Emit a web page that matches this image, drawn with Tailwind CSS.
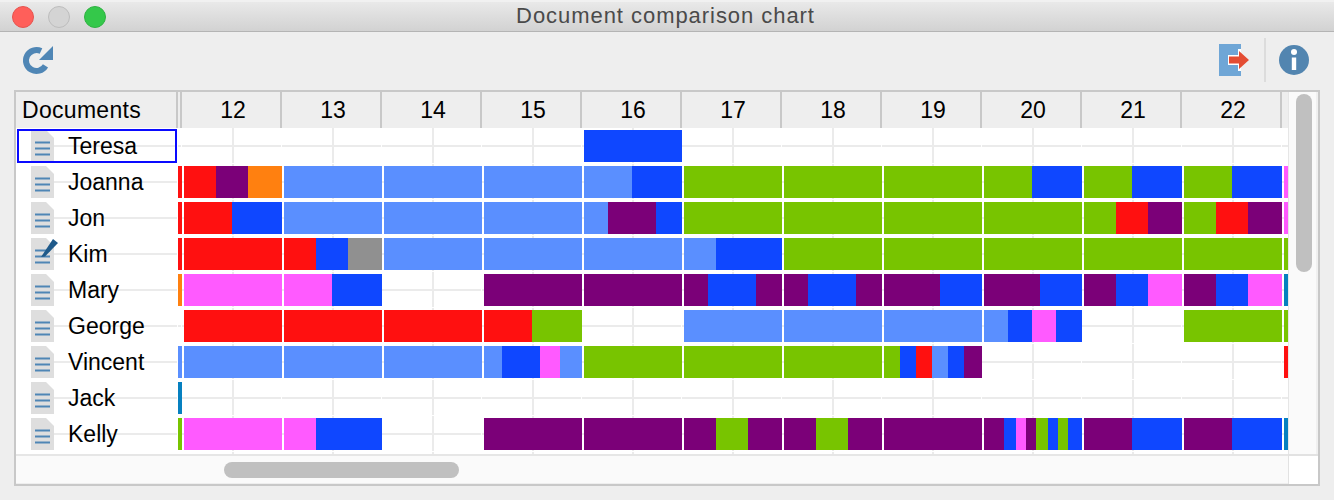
<!DOCTYPE html>
<html lang="en">
<head>
    <meta charset="UTF-8">
    <title>Document comparison chart</title>
    <script src="https://cdn.jsdelivr.net/npm/@tailwindcss/browser@4"></script>
</head>
<body class="bg-[#eeeeee] h-[500px] overflow-hidden font-['Liberation_Sans',sans-serif] text-black">
    <!-- title bar -->
    <header class="flex items-center h-[32px] pl-[12px] border-t-2 border-b border-t-[#f1f1f1] border-b-[#b4b4b4] bg-gradient-to-b from-[#e9e9e9] to-[#d2d2d2]">
        <div class="flex gap-[14px]">
            <div class="w-[22px] h-[22px] rounded-full bg-[#ff5f5a] border border-[#e5544f]"></div>
            <div class="w-[22px] h-[22px] rounded-full bg-[#d4d4d4] border border-[#bdbdbd]"></div>
            <div class="w-[22px] h-[22px] rounded-full bg-[#34c84a] border border-[#2fb242]"></div>
        </div>
        <h1 class="flex-1 pr-[109px] pb-[2px] text-center text-[22px] tracking-[0.95px] text-[#4a4a4a]">Document comparison chart</h1>
    </header>

    <!-- toolbar -->
    <div class="flex items-center justify-between h-[58px] pb-[2px] pl-[20px] pr-[24px]">
        <svg width="36" height="36" viewBox="0 0 36 36">
            <path d="M21 9A10.5 10.5 0 1 0 25.5 23.9" fill="none" stroke="#4f86b5" stroke-width="6"/>
            <polygon points="33,4 33,18 19,18" fill="#4f86b5"/>
        </svg>
        <div class="flex items-center">
            <svg width="32" height="32" viewBox="0 0 32 32">
                <rect width="22" height="32" fill="#6fa6d6"/>
                <polygon points="9,11 22,11 22,21 9,21" fill="#fff"/>
                <polygon points="19,5 22,5 22,27 19,27" fill="#fff"/>
                <polygon points="10,12.5 20,12.5 20,7 30,16 20,25 20,19.5 10,19.5" fill="#e44d33"/>
            </svg>
            <div class="w-[2px] h-[44px] bg-[#dcdcdc] ml-[13px] mr-[12px]"></div>
            <svg width="32" height="32" viewBox="0 0 32 32">
                <circle cx="16" cy="16" r="15" fill="#5285b0"/>
                <circle cx="16" cy="8" r="3" fill="#fff"/>
                <rect x="13.8" y="13.5" width="4.4" height="12.5" fill="#fff"/>
            </svg>
        </div>
    </div>

    <!-- chart table -->
    <div class="flex ml-[14px] w-[1306px] h-[396px] border-2 border-[#c8c8c8]">
        <div class="w-[1272px]">
            <div class="flex h-[36px] text-[23px] leading-[36px] text-center">
                <div class="w-[162px] pl-[6px] text-left border-r-2 border-[#c8c8c8] tracking-[0.3px]">Documents</div>
                <div class="w-[4px] border-r-2 border-[#c8c8c8]"></div>
                <div class="w-[100px] pl-[4px] border-r-2 border-[#c8c8c8]">12</div>
                <div class="w-[100px] pl-[4px] border-r-2 border-[#c8c8c8]">13</div>
                <div class="w-[100px] pl-[4px] border-r-2 border-[#c8c8c8]">14</div>
                <div class="w-[100px] pl-[4px] border-r-2 border-[#c8c8c8]">15</div>
                <div class="w-[100px] pl-[4px] border-r-2 border-[#c8c8c8]">16</div>
                <div class="w-[100px] pl-[4px] border-r-2 border-[#c8c8c8]">17</div>
                <div class="w-[100px] pl-[4px] border-r-2 border-[#c8c8c8]">18</div>
                <div class="w-[100px] pl-[4px] border-r-2 border-[#c8c8c8]">19</div>
                <div class="w-[100px] pl-[4px] border-r-2 border-[#c8c8c8]">20</div>
                <div class="w-[100px] pl-[4px] border-r-2 border-[#c8c8c8]">21</div>
                <div class="w-[100px] pl-[4px] border-r-2 border-[#c8c8c8]">22</div>
            </div>

            <div class="flex h-[326px] bg-white">
                <!-- document names -->
                <div class="relative w-[162px] text-[23px] leading-[36px] bg-[image:linear-gradient(to_bottom,transparent_17px,#ebebeb_17px,#ebebeb_19px,transparent_19px)] bg-[size:146px_36px] bg-[position:15px_0] bg-repeat-y">
                    <div class="absolute top-[1px] left-[1px] w-[160px] h-[34px] border-2 border-[#0a0aff]"></div>
                    <div class="flex items-center h-[36px] pl-[15px]">
                        <svg width="23" height="32" viewBox="0 0 23 32"><polygon points="0,0 15,0 23,8 23,32 0,32" fill="#dedede"/><path d="M4 12.5h15M4 18.5h15M4 24.5h15" stroke="#4f86b5" stroke-width="2"/></svg>
                        <span class="ml-[14px]">Teresa</span>
                    </div>
                    <div class="flex items-center h-[36px] pl-[15px]">
                        <svg width="23" height="32" viewBox="0 0 23 32"><polygon points="0,0 15,0 23,8 23,32 0,32" fill="#dedede"/><path d="M4 12.5h15M4 18.5h15M4 24.5h15" stroke="#4f86b5" stroke-width="2"/></svg>
                        <span class="ml-[14px]">Joanna</span>
                    </div>
                    <div class="flex items-center h-[36px] pl-[15px]">
                        <svg width="23" height="32" viewBox="0 0 23 32"><polygon points="0,0 15,0 23,8 23,32 0,32" fill="#dedede"/><path d="M4 12.5h15M4 18.5h15M4 24.5h15" stroke="#4f86b5" stroke-width="2"/></svg>
                        <span class="ml-[14px]">Jon</span>
                    </div>
                    <div class="flex items-center h-[36px] pl-[15px]">
                        <svg width="28" height="32" viewBox="0 0 28 32" class="mr-[-5px] overflow-visible"><polygon points="0,0 15,0 23,8 23,32 0,32" fill="#dedede"/><path d="M4 12.5h15M4 18.5h15M4 24.5h15" stroke="#4f86b5" stroke-width="2"/><polygon points="10,19 22,1 27,5 14,18.5" fill="#1f5a8a"/></svg>
                        <span class="ml-[14px]">Kim</span>
                    </div>
                    <div class="flex items-center h-[36px] pl-[15px]">
                        <svg width="23" height="32" viewBox="0 0 23 32"><polygon points="0,0 15,0 23,8 23,32 0,32" fill="#dedede"/><path d="M4 12.5h15M4 18.5h15M4 24.5h15" stroke="#4f86b5" stroke-width="2"/></svg>
                        <span class="ml-[14px]">Mary</span>
                    </div>
                    <div class="flex items-center h-[36px] pl-[15px]">
                        <svg width="23" height="32" viewBox="0 0 23 32"><polygon points="0,0 15,0 23,8 23,32 0,32" fill="#dedede"/><path d="M4 12.5h15M4 18.5h15M4 24.5h15" stroke="#4f86b5" stroke-width="2"/></svg>
                        <span class="ml-[14px]">George</span>
                    </div>
                    <div class="flex items-center h-[36px] pl-[15px]">
                        <svg width="23" height="32" viewBox="0 0 23 32"><polygon points="0,0 15,0 23,8 23,32 0,32" fill="#dedede"/><path d="M4 12.5h15M4 18.5h15M4 24.5h15" stroke="#4f86b5" stroke-width="2"/></svg>
                        <span class="ml-[14px]">Vincent</span>
                    </div>
                    <div class="flex items-center h-[36px] pl-[15px]">
                        <svg width="23" height="32" viewBox="0 0 23 32"><polygon points="0,0 15,0 23,8 23,32 0,32" fill="#dedede"/><path d="M4 12.5h15M4 18.5h15M4 24.5h15" stroke="#4f86b5" stroke-width="2"/></svg>
                        <span class="ml-[14px]">Jack</span>
                    </div>
                    <div class="flex items-center h-[36px] pl-[15px]">
                        <svg width="23" height="32" viewBox="0 0 23 32"><polygon points="0,0 15,0 23,8 23,32 0,32" fill="#dedede"/><path d="M4 12.5h15M4 18.5h15M4 24.5h15" stroke="#4f86b5" stroke-width="2"/></svg>
                        <span class="ml-[14px]">Kelly</span>
                    </div>
                </div>

                <!-- bars -->
                <div class="flex flex-col gap-[4px] pt-[2px] w-[1110px] overflow-hidden bg-[image:linear-gradient(to_right,transparent_3px,#fff_3px,#fff_4px,transparent_4px),linear-gradient(to_bottom,transparent_35px,#fff_35px),linear-gradient(to_right,transparent_54px,#ebebeb_54px,#ebebeb_56px,transparent_56px),linear-gradient(to_bottom,transparent_17px,#ebebeb_17px,#ebebeb_19px,transparent_19px)] bg-[size:100px_36px]">
                    <!-- Teresa -->
                    <div class="flex gap-[2px] h-[32px]">
                        <div class="w-[4px]"></div>
                        <div class="w-[98px]"></div><div class="w-[98px]"></div><div class="w-[98px]"></div><div class="w-[98px]"></div>
                        <div class="w-[98px] bg-[#0f47ff]"></div>
                    </div>
                    <!-- Joanna -->
                    <div class="flex gap-[2px] h-[32px]">
                        <div class="w-[4px] bg-[#ff1010]"></div>
                        <div class="flex w-[98px]"><div class="w-[32px] bg-[#ff1010]"></div><div class="w-[32px] bg-[#7b0078]"></div><div class="w-[34px] bg-[#ff8010]"></div></div>
                        <div class="w-[98px] bg-[#5a8fff]"></div>
                        <div class="w-[98px] bg-[#5a8fff]"></div>
                        <div class="w-[98px] bg-[#5a8fff]"></div>
                        <div class="flex w-[98px]"><div class="w-[48px] bg-[#5a8fff]"></div><div class="w-[50px] bg-[#0f47ff]"></div></div>
                        <div class="w-[98px] bg-[#78c400]"></div>
                        <div class="w-[98px] bg-[#78c400]"></div>
                        <div class="w-[98px] bg-[#78c400]"></div>
                        <div class="flex w-[98px]"><div class="w-[48px] bg-[#78c400]"></div><div class="w-[50px] bg-[#0f47ff]"></div></div>
                        <div class="flex w-[98px]"><div class="w-[48px] bg-[#78c400]"></div><div class="w-[50px] bg-[#0f47ff]"></div></div>
                        <div class="flex w-[98px]"><div class="w-[48px] bg-[#78c400]"></div><div class="w-[50px] bg-[#0f47ff]"></div></div>
                        <div class="w-[4px] bg-[#ff5aff]"></div>
                    </div>
                    <!-- Jon -->
                    <div class="flex gap-[2px] h-[32px]">
                        <div class="w-[4px] bg-[#ff1010]"></div>
                        <div class="flex w-[98px]"><div class="w-[48px] bg-[#ff1010]"></div><div class="w-[50px] bg-[#0f47ff]"></div></div>
                        <div class="w-[98px] bg-[#5a8fff]"></div>
                        <div class="w-[98px] bg-[#5a8fff]"></div>
                        <div class="w-[98px] bg-[#5a8fff]"></div>
                        <div class="flex w-[98px]"><div class="w-[24px] bg-[#5a8fff]"></div><div class="w-[48px] bg-[#7b0078]"></div><div class="w-[26px] bg-[#0f47ff]"></div></div>
                        <div class="w-[98px] bg-[#78c400]"></div>
                        <div class="w-[98px] bg-[#78c400]"></div>
                        <div class="w-[98px] bg-[#78c400]"></div>
                        <div class="w-[98px] bg-[#78c400]"></div>
                        <div class="flex w-[98px]"><div class="w-[32px] bg-[#78c400]"></div><div class="w-[32px] bg-[#ff1010]"></div><div class="w-[34px] bg-[#7b0078]"></div></div>
                        <div class="flex w-[98px]"><div class="w-[32px] bg-[#78c400]"></div><div class="w-[32px] bg-[#ff1010]"></div><div class="w-[34px] bg-[#7b0078]"></div></div>
                        <div class="w-[4px] bg-[#ff5aff]"></div>
                    </div>
                    <!-- Kim -->
                    <div class="flex gap-[2px] h-[32px]">
                        <div class="w-[4px] bg-[#ff1010]"></div>
                        <div class="w-[98px] bg-[#ff1010]"></div>
                        <div class="flex w-[98px]"><div class="w-[32px] bg-[#ff1010]"></div><div class="w-[32px] bg-[#0f47ff]"></div><div class="w-[34px] bg-[#909090]"></div></div>
                        <div class="w-[98px] bg-[#5a8fff]"></div>
                        <div class="w-[98px] bg-[#5a8fff]"></div>
                        <div class="w-[98px] bg-[#5a8fff]"></div>
                        <div class="flex w-[98px]"><div class="w-[32px] bg-[#5a8fff]"></div><div class="w-[66px] bg-[#0f47ff]"></div></div>
                        <div class="w-[98px] bg-[#78c400]"></div>
                        <div class="w-[98px] bg-[#78c400]"></div>
                        <div class="w-[98px] bg-[#78c400]"></div>
                        <div class="w-[98px] bg-[#78c400]"></div>
                        <div class="w-[98px] bg-[#78c400]"></div>
                        <div class="w-[4px] bg-[#78c400]"></div>
                    </div>
                    <!-- Mary -->
                    <div class="flex gap-[2px] h-[32px]">
                        <div class="w-[4px] bg-[#ff8010]"></div>
                        <div class="w-[98px] bg-[#ff5aff]"></div>
                        <div class="flex w-[98px]"><div class="w-[48px] bg-[#ff5aff]"></div><div class="w-[50px] bg-[#0f47ff]"></div></div>
                        <div class="w-[98px]"></div>
                        <div class="w-[98px] bg-[#7b0078]"></div>
                        <div class="w-[98px] bg-[#7b0078]"></div>
                        <div class="flex w-[98px]"><div class="w-[24px] bg-[#7b0078]"></div><div class="w-[48px] bg-[#0f47ff]"></div><div class="w-[26px] bg-[#7b0078]"></div></div>
                        <div class="flex w-[98px]"><div class="w-[24px] bg-[#7b0078]"></div><div class="w-[48px] bg-[#0f47ff]"></div><div class="w-[26px] bg-[#7b0078]"></div></div>
                        <div class="flex w-[98px]"><div class="w-[56px] bg-[#7b0078]"></div><div class="w-[42px] bg-[#0f47ff]"></div></div>
                        <div class="flex w-[98px]"><div class="w-[56px] bg-[#7b0078]"></div><div class="w-[42px] bg-[#0f47ff]"></div></div>
                        <div class="flex w-[98px]"><div class="w-[32px] bg-[#7b0078]"></div><div class="w-[32px] bg-[#0f47ff]"></div><div class="w-[34px] bg-[#ff5aff]"></div></div>
                        <div class="flex w-[98px]"><div class="w-[32px] bg-[#7b0078]"></div><div class="w-[32px] bg-[#0f47ff]"></div><div class="w-[34px] bg-[#ff5aff]"></div></div>
                        <div class="w-[4px] bg-[#0680c0]"></div>
                    </div>
                    <!-- George -->
                    <div class="flex gap-[2px] h-[32px]">
                        <div class="w-[4px]"></div>
                        <div class="w-[98px] bg-[#ff1010]"></div>
                        <div class="w-[98px] bg-[#ff1010]"></div>
                        <div class="w-[98px] bg-[#ff1010]"></div>
                        <div class="flex w-[98px]"><div class="w-[48px] bg-[#ff1010]"></div><div class="w-[50px] bg-[#78c400]"></div></div>
                        <div class="w-[98px]"></div>
                        <div class="w-[98px] bg-[#5a8fff]"></div>
                        <div class="w-[98px] bg-[#5a8fff]"></div>
                        <div class="w-[98px] bg-[#5a8fff]"></div>
                        <div class="flex w-[98px]"><div class="w-[24px] bg-[#5a8fff]"></div><div class="w-[24px] bg-[#0f47ff]"></div><div class="w-[24px] bg-[#ff5aff]"></div><div class="w-[26px] bg-[#0f47ff]"></div></div>
                        <div class="w-[98px]"></div>
                        <div class="w-[98px] bg-[#78c400]"></div>
                        <div class="w-[4px] bg-[#78c400]"></div>
                    </div>
                    <!-- Vincent -->
                    <div class="flex gap-[2px] h-[32px]">
                        <div class="w-[4px] bg-[#5a8fff]"></div>
                        <div class="w-[98px] bg-[#5a8fff]"></div>
                        <div class="w-[98px] bg-[#5a8fff]"></div>
                        <div class="w-[98px] bg-[#5a8fff]"></div>
                        <div class="flex w-[98px]"><div class="w-[18px] bg-[#5a8fff]"></div><div class="w-[38px] bg-[#0f47ff]"></div><div class="w-[20px] bg-[#ff5aff]"></div><div class="w-[22px] bg-[#5a8fff]"></div></div>
                        <div class="w-[98px] bg-[#78c400]"></div>
                        <div class="w-[98px] bg-[#78c400]"></div>
                        <div class="w-[98px] bg-[#78c400]"></div>
                        <div class="flex w-[98px]"><div class="w-[16px] bg-[#78c400]"></div><div class="w-[16px] bg-[#0f47ff]"></div><div class="w-[16px] bg-[#ff1010]"></div><div class="w-[16px] bg-[#5a8fff]"></div><div class="w-[16px] bg-[#0f47ff]"></div><div class="w-[18px] bg-[#7b0078]"></div></div>
                        <div class="w-[98px]"></div>
                        <div class="w-[98px]"></div>
                        <div class="w-[98px]"></div>
                        <div class="w-[4px] bg-[#ff1010]"></div>
                    </div>
                    <!-- Jack -->
                    <div class="flex gap-[2px] h-[32px]">
                        <div class="w-[4px] bg-[#0680c0]"></div>
                    </div>
                    <!-- Kelly -->
                    <div class="flex gap-[2px] h-[32px]">
                        <div class="w-[4px] bg-[#78c400]"></div>
                        <div class="w-[98px] bg-[#ff5aff]"></div>
                        <div class="flex w-[98px]"><div class="w-[32px] bg-[#ff5aff]"></div><div class="w-[66px] bg-[#0f47ff]"></div></div>
                        <div class="w-[98px]"></div>
                        <div class="w-[98px] bg-[#7b0078]"></div>
                        <div class="w-[98px] bg-[#7b0078]"></div>
                        <div class="flex w-[98px]"><div class="w-[32px] bg-[#7b0078]"></div><div class="w-[32px] bg-[#78c400]"></div><div class="w-[34px] bg-[#7b0078]"></div></div>
                        <div class="flex w-[98px]"><div class="w-[32px] bg-[#7b0078]"></div><div class="w-[32px] bg-[#78c400]"></div><div class="w-[34px] bg-[#7b0078]"></div></div>
                        <div class="w-[98px] bg-[#7b0078]"></div>
                        <div class="flex w-[98px]"><div class="w-[20px] bg-[#7b0078]"></div><div class="w-[12px] bg-[#0f47ff]"></div><div class="w-[10px] bg-[#ff5aff]"></div><div class="w-[10px] bg-[#7b0078]"></div><div class="w-[12px] bg-[#78c400]"></div><div class="w-[10px] bg-[#0f47ff]"></div><div class="w-[10px] bg-[#78c400]"></div><div class="w-[14px] bg-[#0f47ff]"></div></div>
                        <div class="flex w-[98px]"><div class="w-[48px] bg-[#7b0078]"></div><div class="w-[50px] bg-[#0f47ff]"></div></div>
                        <div class="flex w-[98px]"><div class="w-[48px] bg-[#7b0078]"></div><div class="w-[50px] bg-[#0f47ff]"></div></div>
                        <div class="w-[4px] bg-[#0680c0]"></div>
                    </div>
                </div>
            </div>

            <!-- horizontal scrollbar -->
            <div class="flex items-center h-[30px] pl-[208px] bg-[#fafafa] border-t-2 border-b border-t-[#e6e6e6] border-b-[#eeeeee]">
                <div class="w-[235px] h-[16px] rounded-full bg-[#c0c0c0]"></div>
            </div>
        </div>

        <div class="w-[30px]">
            <!-- vertical scrollbar -->
            <div class="h-[362px] pt-[2px] pl-[7px] bg-[#fafafa] border-l border-r-2 border-l-[#e6e6e6] border-r-[#f0f0f0]">
                <div class="w-[16px] h-[178px] rounded-full bg-[#c0c0c0]"></div>
            </div>
            <div class="h-[30px] bg-white border-t-2 border-l border-[#e2e2e2]"></div>
        </div>
    </div>
</body>
</html>
